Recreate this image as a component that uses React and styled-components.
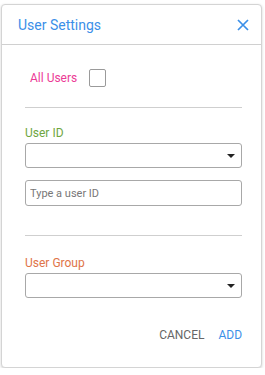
import styled, { createGlobalStyle } from 'styled-components';

const Global = createGlobalStyle`
  html, body {
    margin: 0;
    padding: 0;
    background: #fff;
    font-family: Roboto, "Liberation Sans", Arial, sans-serif;
  }
  body {
    padding: 4px 3px 0 1px;
  }
`;

const Dialog = styled.div`
  box-sizing: border-box;
  width: 261px;
  height: 364px;
  border: 1px solid #d4d4d4;
  border-radius: 4px;
  box-shadow: 0 1px 3px rgba(0, 0, 0, 0.18);
  background: #fff;
  display: flex;
  flex-direction: column;
`;

const Header = styled.div`
  height: 39px;
  border-bottom: 1px solid #d0d0d0;
  display: flex;
  align-items: center;
  justify-content: space-between;
  padding: 0 11px 0 16px;
`;

const Title = styled.span`
  color: #3b8fe8;
  font-size: 14px;
`;

const Close = styled.button`
  border: none;
  background: none;
  padding: 0;
  width: 14px;
  height: 14px;
  display: flex;
  cursor: pointer;
`;

const Body = styled.div`
  flex: 1;
  padding: 0 19px 0 23px;
  display: flex;
  flex-direction: column;
`;

const CheckRow = styled.label`
  display: flex;
  align-items: center;
  gap: 12px;
  height: 17px;
  margin: 24px 0 0 5px;
`;

const Label = styled.span`
  color: ${(p) => p.color};
  font-size: 12px;
`;

const Check = styled.span`
  box-sizing: border-box;
  width: 17px;
  height: 18px;
  border: 1px solid #9a9a9a;
  border-radius: 2px;
`;

const Divider = styled.hr`
  border: none;
  border-top: 1px solid #cfcfcf;
  margin: ${(p) => p.top}px 0 0;
`;

const FieldLabel = styled(Label)`
  display: block;
  margin-top: ${(p) => p.top}px;
  line-height: 14px;
`;

const Select = styled.div`
  box-sizing: border-box;
  height: 25px;
  border: 1px solid #a8a8a8;
  border-radius: 3px;
  margin-top: ${(p) => p.top}px;
  display: flex;
  align-items: center;
  justify-content: flex-end;
  padding-right: 6px;
`;

const Arrow = styled.span`
  width: 0;
  height: 0;
  border-left: 4px solid transparent;
  border-right: 4px solid transparent;
  border-top: 4px solid #222;
  margin-top: 1px;
`;

const Input = styled.input`
  box-sizing: border-box;
  height: 26px;
  border: 1px solid #a8a8a8;
  border-radius: 3px;
  margin-top: 12px;
  padding: 0 4px;
  font-family: Roboto, "Liberation Sans", Arial, sans-serif;
  font-size: 11px;
  color: #333;
  &::placeholder {
    color: #777;
  }
`;

const Footer = styled.div`
  display: flex;
  justify-content: flex-end;
  gap: 14px;
  margin-top: 30px;
`;

const Action = styled.button`
  border: none;
  background: none;
  padding: 0;
  font-family: Roboto, "Liberation Sans", Arial, sans-serif;
  font-size: 12px;
  text-transform: uppercase;
  color: ${(p) => (p.primary ? '#3b8fe8' : '#666')};
  cursor: pointer;
`;

export default function App() {
  return (
    <>
      <Global />
      <Dialog>
        <Header>
          <Title>User Settings</Title>
          <Close aria-label="close">
            <svg width="14" height="14" viewBox="0 0 14 14">
              <path d="M2 2L12 12M12 2L2 12" stroke="#3b8fe8" strokeWidth="1.7" fill="none" />
            </svg>
          </Close>
        </Header>
        <Body>
          <CheckRow>
            <Label color="#ec3b96">All Users</Label>
            <Check />
          </CheckRow>
          <Divider top={21} />
          <FieldLabel color="#6fa63f" top={18}>User ID</FieldLabel>
          <Select top={3}>
            <Arrow />
          </Select>
          <Input placeholder="Type a user ID" />
          <Divider top={29} />
          <FieldLabel color="#e07448" top={20}>User Group</FieldLabel>
          <Select top={3}>
            <Arrow />
          </Select>
          <Footer>
            <Action>Cancel</Action>
            <Action primary>Add</Action>
          </Footer>
        </Body>
      </Dialog>
    </>
  );
}
